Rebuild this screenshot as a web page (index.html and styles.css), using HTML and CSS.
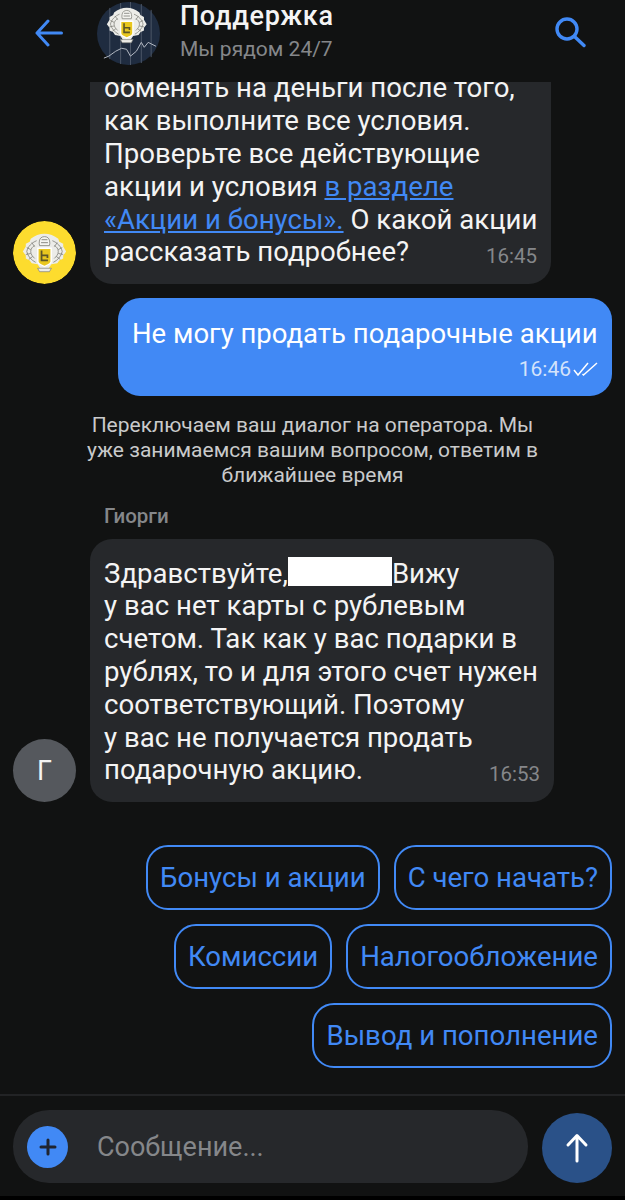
FILE: index.html
```html
<!DOCTYPE html>
<html lang="ru">
<head>
    <meta charset="UTF-8">
    <title>Поддержка</title>
    <link rel="stylesheet" href="styles.css">
</head>
<body>
    <svg class="defs" width="0" height="0">
        <defs>
            <g id="crest">
                <!-- mantling -->
                <path d="M32 13c-5 0-10 2-14 5l-1 3-4 2 0 3-3 5 3 4 0 3 4 2 2 3 6 1 4 6h6l4-6 6-1 2-3 4-2 0-3 3-4-3-5 0-3-4-2-1-3c-4-3-9-5-14-5z" fill="#ecece8"/>
                <g fill="none" stroke="#7d7d76" stroke-width=".8">
                    <path d="M24 20c-5 2-9 6-10 11 1 5 5 9 9 11"/>
                    <path d="M40 20c5 2 9 6 10 11-1 5-5 9-9 11"/>
                    <path d="M22 25c-2 1-4 3-4 6 0 3 2 5 4 7M42 25c2 1 4 3 4 6 0 3-2 5-4 7"/>
                    <path d="M19 22l3 4M14 27l4 2M13 34l5-1M16 39l4-3M45 22l-3 4M50 27l-4 2M51 34l-5-1M48 39l-4-3"/>
                </g>
                <!-- helmet -->
                <path d="M27 25c-1-3 0-7 1.500-8 2-1.500 5-1.500 7 0 1.500 1 2.500 5 1.500 8z" fill="#f4f4f0" stroke="#7d7d76" stroke-width=".8"/>
                <path d="M29 19h6M28.500 22h7" stroke="#7d7d76" stroke-width=".9"/>
                <!-- shield -->
                <path d="M24.500 27h15v14c0 3-4 4-7.500 6-3.500-2-7.500-3-7.500-6z" fill="#fff"/>
                <path d="M26 28.500h12V41c0 2-3 3-6 4.500-3-1.500-6-2.500-6-4.500z" fill="#e9c71f"/>
                <path d="M29 30v10h6.500M29 35h6v2.500" fill="none" stroke="#5d5628" stroke-width="1.800"/>
                <!-- ribbon -->
                <path d="M25 48h14l-2 3.500H27z" fill="#ecece8" stroke="#7d7d76" stroke-width=".7"/>
            </g>
        </defs>
    </svg>
    <div class="phone">
        <header class="topbar">
            <svg class="back-icon" width="28" height="28" viewBox="0 0 28 28">
                <path d="M26.500 14H2M13 2 2 14l11 12" fill="none" stroke="#4189f5" stroke-width="3" stroke-linecap="round" stroke-linejoin="round"/>
            </svg>
            <svg class="avatar-big" width="63" height="63" viewBox="0 0 64 64">
                <circle cx="32" cy="32" r="32" fill="#1f2c40"/>
                <path d="M13 6v52M24 1v62M34 0v64M45 2v60M55 8v48" stroke="#4d5768" stroke-width="1"/>
                <g transform="translate(.800 -6) scale(.92)"><use href="#crest"/></g>
                <path d="M7 57l5-2 7-5 6-3 5 1 4 7 6-5 5-9 3 5 4-5 8 4" fill="none" stroke="#b4bac4" stroke-width="1"/>
            </svg>
            <div class="topbar-title">
                <div class="chat-name">Поддержка</div>
                <div class="chat-status">Мы рядом 24/7</div>
            </div>
            <svg class="search-icon" width="32" height="32" viewBox="0 0 32 32">
                <circle cx="13" cy="13" r="10" fill="none" stroke="#4189f5" stroke-width="3.400"/>
                <path d="M20.500 20.500 30 29.500" fill="none" stroke="#4189f5" stroke-width="3.400" stroke-linecap="round"/>
            </svg>
        </header>

        <main class="messages">
            <div class="row-in">
                <svg class="avatar" width="63" height="63" viewBox="0 0 64 64">
                    <circle cx="32" cy="32" r="32" fill="#fddc2e"/>
                    <use href="#crest"/>
                </svg>
                <div class="bubble bubble-in bubble-first">
                    обменять на деньги после того,<br>
                    как выполните все условия.<br>
                    Проверьте все действующие<br>
                    акции и условия <a href="#">в разделе<br>«Акции и бонусы».</a> О какой акции<br>
                    рассказать подробнее?<span class="time">16:45</span>
                </div>
            </div>

            <div class="bubble-out">
                <div>Не могу продать подарочные акции</div>
                <div class="out-meta">
                    <span class="time-out">16:46</span>
                    <svg width="25" height="16" viewBox="0 0 25 16">
                        <path d="M1 9l4 5L15 2M9.500 13l1 1L24 2" fill="none" stroke="#fff" stroke-width="1.500"/>
                    </svg>
                </div>
            </div>

            <p class="system-note">Переключаем ваш диалог на оператора. Мы уже занимаемся вашим вопросом, ответим в ближайшее время</p>

            <div class="sender">Гиорги</div>
            <div class="row-in">
                <div class="avatar avatar-letter">Г</div>
                <div class="bubble bubble-in">
                    Здравствуйте,<span class="redacted"></span>Вижу<br>
                    у вас нет карты с рублевым<br>
                    счетом. Так как у вас подарки в<br>
                    рублях, то и для этого счет нужен<br>
                    соответствующий. Поэтому<br>
                    у вас не получается продать<br>
                    подарочную акцию.<span class="time">16:53</span>
                </div>
            </div>

            <div class="chips">
                <button class="chip">Бонусы и акции</button>
                <button class="chip">С чего начать?</button>
            </div>
            <div class="chips">
                <button class="chip">Комиссии</button>
                <button class="chip">Налогообложение</button>
            </div>
            <div class="chips">
                <button class="chip">Вывод и пополнение</button>
            </div>
        </main>

        <footer class="composer">
            <div class="input-pill">
                <span class="plus-btn">
                    <svg width="18" height="18" viewBox="0 0 18 18">
                        <path d="M9 2v14M2 9h14" stroke="#1f2430" stroke-width="3" stroke-linecap="round"/>
                    </svg>
                </span>
                <span class="placeholder">Сообщение...</span>
            </div>
            <span class="send-btn">
                <svg width="24" height="30" viewBox="0 0 24 30">
                    <path d="M12 28V3M3 12 12 2.500 21 12" fill="none" stroke="#fff" stroke-width="3" stroke-linecap="round" stroke-linejoin="round"/>
                </svg>
            </span>
        </footer>
    </div>
</body>
</html>
```

FILE: styles.css
```css
* {
    box-sizing: border-box;
}

body {
    margin: 0;
    background-color: #111212;
    font-family: Roboto, "Liberation Sans", sans-serif;
    color: #f4f4f4;
}

.defs {
    display: block;
    height: 0;
}

.phone {
    width: 625px;
    height: 1200px;
    display: flex;
    flex-direction: column;
    overflow: hidden;
}

.topbar {
    height: 82px;
    flex: none;
    display: flex;
    align-items: center;
    padding: 0 39px 0 35px;
    background-color: #111212;
    position: relative;
    z-index: 1;
}

.back-icon {
    margin-bottom: 16px;
    flex: none;
}

.avatar-big {
    margin: 0 0 16px 34px;
    flex: none;
}

.topbar-title {
    flex: 1;
    margin-left: 20px;
    margin-bottom: 18px;
}

.chat-name {
    font-size: 27px;
    font-weight: 500;
    line-height: 33px;
    letter-spacing: 0.6px;
}

.chat-status {
    font-size: 21px;
    line-height: 32px;
    color: #85878a;
}

.search-icon {
    margin-bottom: 18px;
}

.messages {
    height: 1014px;
    flex: none;
    display: flex;
    flex-direction: column;
    justify-content: flex-end;
    padding: 0 13px 26px;
    border-bottom: 2px solid #222325;
}

.row-in {
    display: flex;
    flex: none;
    align-items: flex-end;
    gap: 14px;
}

.avatar {
    width: 63px;
    height: 63px;
    flex: none;
    border-radius: 50%;
}

.avatar-letter {
    display: flex;
    align-items: center;
    justify-content: center;
    background-color: #55585d;
    font-size: 27px;
}

.bubble {
    font-size: 27.6px;
    line-height: 32.8px;
    background-color: #26282b;
    border-radius: 22px;
    position: relative;
    white-space: nowrap;
}

.bubble-in {
    width: 464px;
    padding: 17.600px 14px 14.800px;
}

.bubble-first {
    width: 461px;
}

.bubble a {
    color: #4189f5;
}

.time {
    position: absolute;
    right: 14px;
    bottom: 16px;
    font-size: 20.500px;
    line-height: 24px;
    color: #85878a;
}

.bubble-out {
    align-self: flex-end;
    flex: none;
    width: 494px;
    height: 98px;
    margin-top: 14px;
    padding: 19px 14px 0;
    background-color: #4189f5;
    border-radius: 22px;
    font-size: 27.5px;
    line-height: 33px;
    color: #fff;
    white-space: nowrap;
}

.out-meta {
    display: flex;
    justify-content: flex-end;
    align-items: center;
    gap: 2px;
    height: 30px;
    margin-top: 4px;
}

.time-out {
    font-size: 21px;
    color: #d3e3fb;
}

.system-note {
    margin: 17px 70px 16px;
    flex: none;
    font-size: 21px;
    line-height: 25px;
    text-align: center;
    color: #c9cacb;
}

.sender {
    margin: 0 0 11px 91px;
    flex: none;
    font-size: 20.500px;
    line-height: 24px;
    font-weight: 500;
    color: #85878a;
}

.redacted {
    display: inline-block;
    width: 104px;
    height: 29px;
    margin-bottom: -3px;
    background-color: #fff;
}

.chips {
    display: flex;
    flex: none;
    justify-content: flex-end;
    gap: 14px;
    margin-top: 14px;
}

.row-in + .chips {
    margin-top: 43px;
}

.chip {
    height: 65px;
    padding: 0 12px;
    background-color: transparent;
    border: 2px solid #4189f5;
    border-radius: 22px;
    font-family: inherit;
    font-size: 27.600px;
    color: #4189f5;
}

.composer {
    height: 100px;
    flex: none;
    display: flex;
    align-items: flex-start;
    padding: 14px 13px 0;
    gap: 14px;
}

.input-pill {
    width: 515px;
    height: 73px;
    display: flex;
    align-items: center;
    padding-left: 14px;
    background-color: #26282b;
    border-radius: 36px;
}

.plus-btn {
    width: 41px;
    height: 42px;
    display: flex;
    align-items: center;
    justify-content: center;
    background-color: #4189f5;
    border-radius: 50%;
}

.placeholder {
    margin-left: 29px;
    font-size: 27px;
    color: #85878a;
}

.send-btn {
    width: 70px;
    height: 70px;
    margin-top: 3px;
    display: flex;
    align-items: center;
    justify-content: center;
    background-color: #2a5188;
    border-radius: 50%;
}

.phone::after {
    content: "";
    flex: 1;
    background-color: #000;
}
```
